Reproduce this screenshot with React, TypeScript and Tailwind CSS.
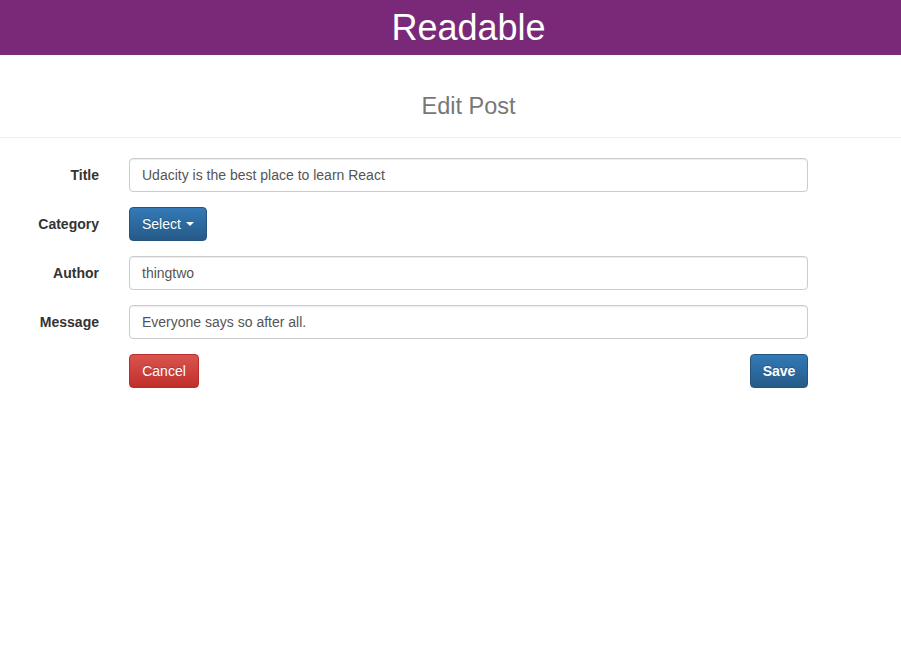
export default function App() {
  const rows = [
    { label: 'Title', value: 'Udacity is the best place to learn React' },
    { label: 'Category', value: null },
    { label: 'Author', value: 'thingtwo' },
    { label: 'Message', value: 'Everyone says so after all.' },
  ];

  return (
    <div className="min-h-screen bg-white font-['Liberation_Sans',Arial,sans-serif] text-[14px] text-[#333]">
      {/* Header */}
      <div className="h-[55px] bg-[#7a2978] flex items-center justify-center pl-[36px]">
        <h1 className="text-[36px] leading-none text-white">Readable</h1>
      </div>

      {/* Page title */}
      <div className="h-[83px] border-b border-[#eee] flex items-center justify-center pl-[36px]">
        <h2 className="text-[23.5px] text-[#777] pt-[22px]">Edit Post</h2>
      </div>

      {/* Form */}
      <div className="pt-[20px] flex flex-col gap-[15px]">
        {rows.map((row) => (
          <div key={row.label} className="flex items-center">
            <label className="w-[99px] text-right font-bold">{row.label}</label>
            <div className="ml-[30px] w-[679px]">
              {row.value === null ? (
                <button className="h-[34px] px-[12px] rounded-[4px] border border-[#245580] bg-gradient-to-b from-[#337ab7] to-[#265a88] text-white flex items-center gap-[5px] [text-shadow:0_-1px_0_rgba(0,0,0,0.2)]">
                  Select
                  <span className="w-0 h-0 border-x-[4px] border-x-transparent border-t-[4px] border-t-white" />
                </button>
              ) : (
                <div className="h-[34px] px-[12px] flex items-center rounded-[4px] border border-[#ccc] text-[#555] shadow-[inset_0_1px_1px_rgba(0,0,0,0.075)]">
                  {row.value}
                </div>
              )}
            </div>
          </div>
        ))}

        <div className="flex">
          <div className="ml-[129px] w-[679px] flex justify-between">
            <button className="h-[34px] w-[70px] rounded-[4px] border border-[#b92c28] bg-gradient-to-b from-[#d9534f] to-[#c12e2a] text-white [text-shadow:0_-1px_0_rgba(0,0,0,0.2)]">
              Cancel
            </button>
            <button className="h-[34px] w-[58px] rounded-[4px] border border-[#245580] bg-gradient-to-b from-[#337ab7] to-[#265a88] text-white font-bold [text-shadow:0_-1px_0_rgba(0,0,0,0.2)]">
              Save
            </button>
          </div>
        </div>
      </div>
    </div>
  );
}
